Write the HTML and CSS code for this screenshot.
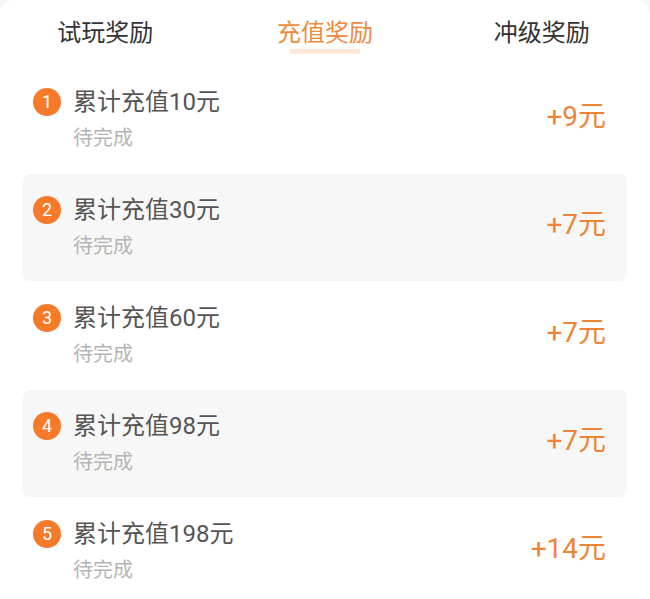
FILE: index.html
```html
<!DOCTYPE html>
<html lang="zh-CN">
<head>
  <meta charset="UTF-8">
  <meta name="viewport" content="width=device-width, initial-scale=1.0">
  <title>充值奖励</title>
  <link rel="stylesheet" href="styles.css">
</head>
<body>
  <div class="sheet">
    <div class="tabs">
      <div class="tab">试玩奖励</div>
      <div class="tab active"><span>充值奖励</span></div>
      <div class="tab">冲级奖励</div>
    </div>

    <div class="list">
      <div class="row">
        <div class="num">1</div>
        <div class="info">
          <div class="title">累计充值10元</div>
          <div class="status">待完成</div>
        </div>
        <div class="amount">+9元</div>
      </div>
      <div class="row alt">
        <div class="num">2</div>
        <div class="info">
          <div class="title">累计充值30元</div>
          <div class="status">待完成</div>
        </div>
        <div class="amount">+7元</div>
      </div>
      <div class="row">
        <div class="num">3</div>
        <div class="info">
          <div class="title">累计充值60元</div>
          <div class="status">待完成</div>
        </div>
        <div class="amount">+7元</div>
      </div>
      <div class="row alt">
        <div class="num">4</div>
        <div class="info">
          <div class="title">累计充值98元</div>
          <div class="status">待完成</div>
        </div>
        <div class="amount">+7元</div>
      </div>
      <div class="row">
        <div class="num">5</div>
        <div class="info">
          <div class="title">累计充值198元</div>
          <div class="status">待完成</div>
        </div>
        <div class="amount">+14元</div>
      </div>
    </div>
  </div>
</body>
</html>
```

FILE: styles.css
```css
html, body {
  margin: 0;
  padding: 0;
}
body {
  font-family: "Roboto", "Noto Sans CJK SC", sans-serif;
  background: #f7f7f7;
  color: #333;
}
.sheet {
  background: #fff;
  border-radius: 14px 14px 0 0;
  min-height: 599px;
}
.tabs {
  display: grid;
  grid-template-columns: repeat(3, 1fr);
  height: 66px;
  align-items: start;
  text-align: center;
}
.tab {
  font-size: 24px;
  line-height: 30px;
  padding-top: 18px;
  color: #333;
}
.tab:first-child {
  padding-right: 6px;
}
.tab.active {
  color: #f08a3e;
}
.tab.active span {
  display: inline-block;
  background: linear-gradient(to bottom, #fde3d0, #fdeee3);
  background-size: 70px 5px;
  background-repeat: no-repeat;
  background-position: center bottom;
  padding-bottom: 6px;
}
.list {
  padding: 0 23px 0 22px;
}
.row {
  display: flex;
  align-items: center;
  height: 107px;
  padding: 0 21px 0 11px;
  border-radius: 8px;
  margin-bottom: 1px;
}
.row.alt {
  background: #f7f7f7;
}
.num {
  align-self: flex-start;
  margin-top: 22px;
  width: 28px;
  height: 28px;
  border-radius: 50%;
  background: #f57a29;
  color: #fff;
  font-size: 18px;
  line-height: 28px;
  text-align: center;
}
.info {
  flex: 1;
  margin-left: 12px;
}
.title {
  font-size: 24px;
  line-height: 36px;
  color: #555;
}
.status {
  font-size: 20px;
  line-height: 36px;
  color: #b5b5b5;
}
.amount {
  font-size: 28px;
  line-height: 36px;
  color: #ef8434;
  margin-bottom: 6px;
}
```
